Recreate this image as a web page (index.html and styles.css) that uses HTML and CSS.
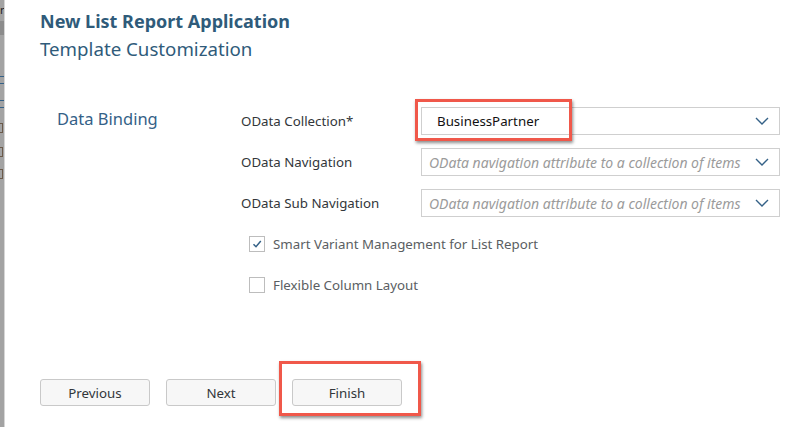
FILE: index.html
```html
<!DOCTYPE html>
<html>
<head>
<meta charset="utf-8">
<link rel="stylesheet" href="styles.css">
</head>
<body>
<div class="page">
  <div class="side">
    <span class="frag f1">r</span>
    <span class="band"></span>
    <span class="lines l1"></span>
    <span class="lines l2"></span>
    <span class="frag f3"></span>
    <span class="frag f4"></span>
    <span class="frag f5"></span>
  </div>
  <div class="main">
    <h1 class="title">New List Report Application</h1>
    <h2 class="subtitle">Template Customization</h2>
    <div class="form">
      <div class="section">Data Binding</div>
      <div class="fields">
        <div class="row">
          <label class="label">OData Collection*</label>
          <div class="select hl-wrap">
            <span class="value">BusinessPartner</span>
            <svg class="chev" width="14" height="8" viewBox="0 0 14 8"><path d="M1 1 L7 7 L13 1" fill="none" stroke="#346187" stroke-width="1.4"/></svg>
            <span class="hl hl-input"></span>
          </div>
        </div>
        <div class="row">
          <label class="label">OData Navigation</label>
          <div class="select">
            <span class="placeholder">OData navigation attribute to a collection of items</span>
            <svg class="chev" width="14" height="8" viewBox="0 0 14 8"><path d="M1 1 L7 7 L13 1" fill="none" stroke="#346187" stroke-width="1.4"/></svg>
          </div>
        </div>
        <div class="row">
          <label class="label">OData Sub Navigation</label>
          <div class="select">
            <span class="placeholder">OData navigation attribute to a collection of items</span>
            <svg class="chev" width="14" height="8" viewBox="0 0 14 8"><path d="M1 1 L7 7 L13 1" fill="none" stroke="#346187" stroke-width="1.4"/></svg>
          </div>
        </div>
        <div class="check-row first">
          <span class="box checked"><svg width="12" height="12" viewBox="0 0 12 12"><path d="M2.5 6.2 L5 8.7 L9.8 3" fill="none" stroke="#346187" stroke-width="1.5"/></svg></span>
          <span class="check-text">Smart Variant Management for List Report</span>
        </div>
        <div class="check-row">
          <span class="box"></span>
          <span class="check-text">Flexible Column Layout</span>
        </div>
      </div>
    </div>
    <div class="buttons">
      <button class="btn">Previous</button>
      <button class="btn">Next</button>
      <div class="hl-wrap">
        <button class="btn">Finish</button>
        <span class="hl hl-btn"></span>
      </div>
    </div>
  </div>
</div>
</body>
</html>
```

FILE: styles.css
```css
html, body {
  margin: 0;
  padding: 0;
  background: #ffffff;
}
body {
  width: 812px;
  height: 427px;
  overflow: hidden;
  font-family: "Noto Sans", "Open Sans", sans-serif;
}
.page {
  display: flex;
  height: 427px;
}
.side {
  width: 4px;
  flex: 0 0 4px;
  background: #a3a3a3;
  border-right: 1px solid #d6d6d6;
  position: relative;
  overflow: hidden;
}
.frag {
  position: absolute;
  left: 0;
  display: block;
}
.f1 {
  top: 4px;
  font-size: 11px;
  line-height: 12px;
  color: #222;
}
.band {
  position: absolute;
  left: 0;
  top: 21px;
  width: 4px;
  height: 14px;
  background: #8c8c8c;
}
.lines {
  position: absolute;
  left: 0;
  width: 4px;
  height: 6px;
  border-top: 1px solid #346187;
  border-bottom: 1px solid #346187;
}
.l1 { top: 76px; }
.l2 { top: 100px; }
.f3, .f4, .f5 {
  width: 2px;
  height: 8px;
  border: 1px solid #6b5a4a;
  border-left: none;
}
.f3 { top: 123px; }
.f4 { top: 147px; }
.f5 { top: 169px; }
.main {
  flex: 1;
  padding-left: 35px;
}
.title {
  margin: 10px 0 0;
  font-size: 18px;
  line-height: 22px;
  font-weight: 700;
  color: #2f5b7a;
}
.subtitle {
  margin: 4px 0 0;
  font-size: 18.7px;
  line-height: 26px;
  font-weight: 400;
  color: #2f5b7a;
}
.form {
  display: flex;
  margin-top: 45px;
}
.section {
  width: 201px;
  padding-left: 17px;
  padding-top: 1px;
  font-size: 16.5px;
  line-height: 22px;
  color: #346187;
  box-sizing: border-box;
}
.fields {
  display: flex;
  flex-direction: column;
}
.row {
  display: flex;
  align-items: center;
  height: 28px;
  margin-bottom: 13px;
}
.label {
  width: 180px;
  font-size: 13.3px;
  color: #32363a;
}
.select {
  position: relative;
  width: 359px;
  height: 28px;
  box-sizing: border-box;
  border: 1px solid #cfcfcf;
  display: flex;
  align-items: center;
  padding-left: 7px;
  padding-right: 10px;
  background: #fff;
}
.value {
  flex: 1;
  padding-left: 8px;
  font-size: 13.3px;
  color: #111;
}
.placeholder {
  flex: 1;
  font-size: 14px;
  font-style: italic;
  color: #9b9b9b;
  white-space: nowrap;
}
.chev {
  flex: 0 0 auto;
}
.hl-wrap {
  position: relative;
}
.hl {
  position: absolute;
  border: 3px solid #f0584a;
  box-shadow: 1px 2px 3px rgba(0, 0, 0, 0.45);
  pointer-events: none;
}
.hl-input {
  left: -7px;
  top: -9px;
  width: 151px;
  height: 36px;
}
.hl-btn {
  left: -13px;
  top: -18px;
  width: 136px;
  height: 49px;
}
.check-row {
  display: flex;
  align-items: center;
  height: 20px;
  margin-left: 8px;
  margin-bottom: 21px;
}
.check-row.first {
  margin-top: 4px;
}
.box {
  width: 16px;
  height: 16px;
  box-sizing: border-box;
  border: 1px solid #bdbdbd;
  background: #fff;
  display: flex;
  align-items: center;
  justify-content: center;
  margin-right: 8px;
}
.check-text {
  font-size: 13.3px;
  color: #5a5e62;
}
.buttons {
  display: flex;
  gap: 16px;
  margin-top: 63px;
}
.btn {
  width: 110px;
  height: 27px;
  box-sizing: border-box;
  border: 1px solid #c9c9c9;
  border-radius: 3px;
  background: #f7f7f7;
  font-family: "Noto Sans", "Open Sans", sans-serif;
  font-size: 13.3px;
  color: #32363a;
  padding: 0;
}
```
